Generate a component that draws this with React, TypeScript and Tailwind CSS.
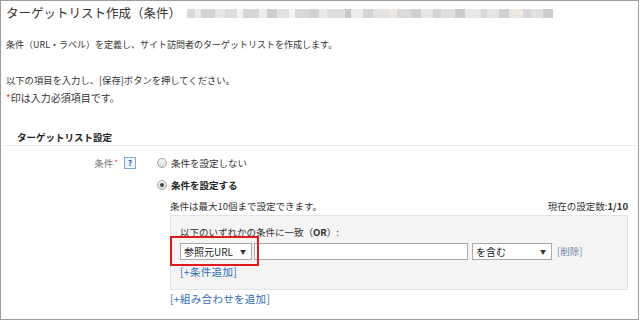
import React from 'react';

const blurBlocks = [
  'w-[8px] bg-[#d9d9d9]', 'w-[6px] bg-[#ebebeb]', 'w-[14px] bg-[#d3d3d3]', 'w-[10px] bg-[#e6e6e6]',
  'w-[12px] bg-[#dcdcdc]', 'w-[6px] bg-[#f2f2f2]', 'w-[16px] bg-[#d6d6d6]', 'w-[8px] bg-[#ededed]',
  'w-[10px] bg-[#cecece]', 'w-[12px] bg-[#e2e2e2]', 'w-[6px] bg-[#f4f4f4]', 'w-[14px] bg-[#d9d9d9]',
  'w-[10px] bg-[#d1d1d1]', 'w-[8px] bg-[#e8e8e8]', 'w-[18px] bg-[#dedede]', 'w-[6px] bg-[#c8c8c8]',
  'w-[12px] bg-[#ebebeb]', 'w-[10px] bg-[#d4d4d4]', 'w-[16px] bg-[#e3e3e3]', 'w-[8px] bg-[#eee8e2]',
  'w-[14px] bg-[#dadada]', 'w-[10px] bg-[#cfcfcf]', 'w-[12px] bg-[#e6e6e6]', 'w-[8px] bg-[#d5d5d5]',
  'w-[14px] bg-[#e0e0e0]', 'w-[10px] bg-[#cbcbcb]', 'w-[16px] bg-[#e8e8e8]', 'w-[6px] bg-[#d8d8d8]',
  'w-[12px] bg-[#e4e4e4]', 'w-[10px] bg-[#d0d0d0]', 'w-[14px] bg-[#ebe6e0]', 'w-[8px] bg-[#d6d6d6]',
  'w-[12px] bg-[#e1e1e1]', 'w-[10px] bg-[#cdcdcd]',
];

const Radio: React.FC<{ checked?: boolean }> = ({ checked }) => (
  <span className="w-[10px] h-[10px] rounded-full border border-[#a3a3a3] bg-gradient-to-b from-[#f7f7f7] to-[#d9d9d9] flex items-center justify-center">
    {checked && <span className="w-[4px] h-[4px] rounded-full bg-[#444]" />}
  </span>
);

const Select: React.FC<{ label: string; className: string }> = ({ label, className }) => (
  <div className={`h-[17px] border border-[#a9a9a9] bg-white flex items-center justify-between pl-[3px] pr-[5px] ${className}`}>
    <span className="text-[10px] text-[#222]">{label}</span>
    <span className="text-[6px] text-[#333]">▼</span>
  </div>
);

export default function App() {
  return (
    <div className="w-[640px] h-[321px] bg-white text-[#333] text-[9.5px] font-['Noto_Sans_CJK_JP',sans-serif]">
      <div className="w-[639px] h-[320px] border border-[#9c9c9c] relative">
        {/* title */}
        <div className="h-[24px] flex items-center pl-[5px]">
          <span className="text-[12.5px] leading-[24px] text-[#333]">ターゲットリスト作成（条件）</span>
          <div className="ml-[6px] flex h-[9px] blur-[0.5px]">
            {blurBlocks.map((c, i) => (
              <span key={i} className={`h-full ${c}`} />
            ))}
          </div>
        </div>

        <div className="pl-[5px] mt-[12px] leading-[16px] text-[9px]">
          条件（URL・ラベル）を定義し、サイト訪問者のターゲットリストを作成します。
        </div>
        <div className="pl-[5px] mt-[19px] leading-[17px] text-[9.3px]">
          以下の項目を入力し、[保存]ボタンを押してください。
        </div>
        <div className="pl-[5px] leading-[17px] text-[10px]">
          <span className="text-[#e0401c]">*</span>印は入力必須項目です。
        </div>

        {/* section heading */}
        <div className="mt-[23px] ml-[3px] mr-[2px] pl-[13px] border-b border-[#e6e6e6] font-bold text-[#222] leading-[16px]">
          ターゲットリスト設定
        </div>

        <div className="flex mt-[6px]">
          <div className="w-[149px] h-[22px] flex items-center justify-end pr-[14px]">
            <span className="text-[#777]">条件</span>
            <span className="text-[#e0502a] text-[8px] ml-[1px]">*</span>
            <span className="ml-[6px] w-[12px] h-[12px] border border-[#7ea6d6] bg-[#eef4fb] text-[#2a5db0] text-[8px] font-bold flex items-center justify-center leading-none">?</span>
          </div>
          <div className="flex-1 pl-[7px] pr-[10px]">
            <div className="h-[22px] flex items-center gap-[4px]">
              <Radio />
              <span>条件を設定しない</span>
            </div>
            <div className="h-[22px] flex items-center gap-[4px]">
              <Radio checked />
              <span className="font-bold text-[#222]">条件を設定する</span>
            </div>
            <div className="pl-[13px]">
              <div className="mt-[1px] h-[18px] flex items-center justify-between">
                <span>条件は最大10個まで設定できます。</span>
                <span>
                  現在の設定数:<span className="font-bold">1/10</span>
                </span>
              </div>
              <div className="border border-[#e3e3e3] bg-[#f4f4f4] pl-[9px] pt-[8px] pb-[9px]">
                <div className="leading-[16px]">
                  以下のいずれかの条件に一致（<span className="font-bold">OR</span>）:
                </div>
                <div className="mt-[3px] flex items-center">
                  <Select label="参照元URL" className="w-[72px]" />
                  <div className="ml-[2px] w-[214px] h-[17px] border border-[#a9a9a9] bg-white" />
                  <Select label="を含む" className="ml-[4px] w-[80px]" />
                  <span className="ml-[5px] text-[#6f86a3]">[削除]</span>
                </div>
                <div className="mt-[4px] leading-[16px] text-[10.5px] tracking-[0.3px] text-[#2d6cb5]">[+条件追加]</div>
              </div>
              <div className="mt-[1px] leading-[16px] text-[10.5px] tracking-[0.3px] text-[#2d6cb5]">[+組み合わせを追加]</div>
            </div>
          </div>
        </div>

        {/* annotation overlay */}
        <div className="absolute left-[169px] top-[235px] w-[89px] h-[30px] border-2 border-[#e0191c]" />
      </div>
    </div>
  );
}
